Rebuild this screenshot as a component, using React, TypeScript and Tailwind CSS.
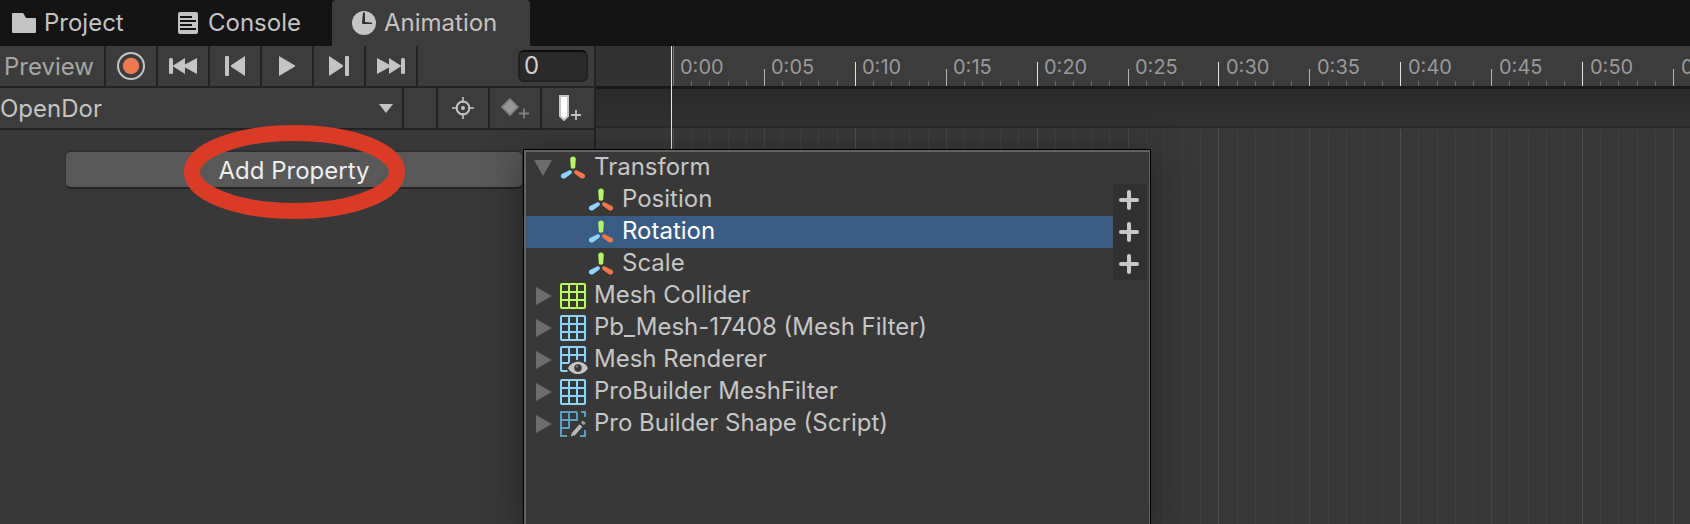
import React, { useState } from "react";

const FRAME_STEP = 1000 / 55;
const frames = Array.from({ length: 70 }, (_, i) => i);
const labels = Array.from({ length: 12 }, (_, i) => `0:${String(i * 5).padStart(2, "0")}`);

const frameX = (i: number) => Math.round(77 + i * FRAME_STEP);

function FolderIcon() {
  return (
    <svg width="24" height="20" viewBox="0 0 24 20" fill="#c4c4c4" aria-hidden="true">
      <path d="M0 1a1 1 0 0 1 1-1h9.5a1 1 0 0 1 1 .6L14 5h9a1 1 0 0 1 1 1v13a1 1 0 0 1-1 1H1a1 1 0 0 1-1-1z" />
    </svg>
  );
}

function ConsoleIcon() {
  return (
    <svg width="20" height="22" viewBox="0 0 20 22" aria-hidden="true">
      <rect width="20" height="22" rx="2" fill="#c4c4c4" />
      <path d="M2 5h12M2 9h16M2 13h12M2 17h16" stroke="#141414" strokeWidth="2" />
    </svg>
  );
}

function ClockIcon() {
  return (
    <svg width="24" height="24" viewBox="0 0 24 24" aria-hidden="true">
      <circle cx="12" cy="12" r="12" fill="#c4c4c4" />
      <path d="M11 1.5h2V11l7 .7v1.3h-9.2l-.8-.9z" fill="#2f2f2f" />
    </svg>
  );
}

function RecordIcon() {
  return (
    <svg width="28" height="28" viewBox="0 0 28 28" aria-hidden="true">
      <circle cx="14" cy="14" r="13" fill="none" stroke="#c4c4c4" strokeWidth="2" />
      <circle cx="14" cy="14" r="8.2" fill="#ee7950" />
    </svg>
  );
}

function FirstIcon() {
  return (
    <svg width="28" height="20" viewBox="0 0 28 20" fill="#c4c4c4" aria-hidden="true">
      <rect x="0" y="2" width="4" height="16" rx="1.5" />
      <path d="M16 2v6.5L28 2v16l-12-6.5V18L3.5 10z" />
    </svg>
  );
}

function PrevIcon() {
  return (
    <svg width="20" height="20" viewBox="0 0 20 20" fill="#c4c4c4" aria-hidden="true">
      <rect x="0" y="0" width="4" height="20" rx="1" />
      <path d="M20 0v20L6 10.8V9.2z" />
    </svg>
  );
}

function PlayIcon() {
  return (
    <svg width="16" height="20" viewBox="0 0 16 20" fill="#c4c4c4" aria-hidden="true">
      <path d="M0 0l16 9.5v1L0 20z" />
    </svg>
  );
}

function Flip({ children }: { children: React.ReactNode }) {
  return <span className="flex -scale-x-100">{children}</span>;
}

function TargetIcon() {
  return (
    <svg width="22" height="22" viewBox="0 0 22 22" fill="none" stroke="#c4c4c4" strokeWidth="2" aria-hidden="true">
      <circle cx="11" cy="11" r="6.4" />
      <path d="M11 0v6M11 16v6M0 11h6M16 11h6" strokeWidth="1.6" />
      <circle cx="11" cy="11" r="2" fill="#c4c4c4" stroke="none" />
    </svg>
  );
}

function KeyframeIcon() {
  return (
    <svg width="28" height="24" viewBox="0 0 28 24" aria-hidden="true">
      <path d="M9 3l8 8-8 8-8-8z" fill="#979797" stroke="#7d7d7d" strokeWidth="1.6" />
      <path d="M18 17.500h10M23 12.500v10" stroke="#808080" strokeWidth="1.8" />
    </svg>
  );
}

function EventIcon() {
  return (
    <svg width="22" height="26" viewBox="0 0 22 26" aria-hidden="true">
      <path d="M1 1h8v20l-4 4-4-4z" fill="#fff" stroke="#c4c4c4" strokeWidth="2" />
      <path d="M12 20h10M17 15v10" stroke="#c4c4c4" strokeWidth="1.8" />
    </svg>
  );
}

function TransformIcon() {
  return (
    <svg width="26" height="26" viewBox="0 0 26 26" strokeLinecap="round" aria-hidden="true">
      <path d="M10.200 4c0-3.400 5.600-3.400 5.600 0l-.6 8.500c-.3 1.600-4.100 1.600-4.400 0z" fill="#b4f266" />
      <path d="M5.500 17.300l4-2c2.200-.9 3.300 2.200 1.600 3.400l-5.600 4.300c-3.400 2.200-6.300-2.100-3.600-4z" fill="#8fd3fa" />
      <path d="M20.500 17.300l-4-2c-2.200-.9-3.300 2.200-1.600 3.400l5.600 4.300c3.400 2.200 6.300-2.100 3.600-4z" fill="#f3764b" />
    </svg>
  );
}

function GridIcon({ color }: { color: string }) {
  return (
    <svg width="26" height="26" viewBox="0 0 26 26" fill="none" stroke={color} strokeWidth="2" aria-hidden="true">
      <rect x="1" y="1" width="24" height="24" rx="1" />
      <path d="M9 1v24M17 1v24M1 9h24M1 17h24" />
    </svg>
  );
}

function RendererIcon() {
  return (
    <svg width="28" height="28" viewBox="0 0 28 28" fill="none" aria-hidden="true">
      <path d="M25 16V2a1 1 0 0 0-1-1H2a1 1 0 0 0-1 1v22a1 1 0 0 0 1 1h5.5M9 1v16M17 1v13M1 9h24M1 17h8" stroke="#8fd3fa" strokeWidth="2" />
      <path d="M8 22c4-8.500 16-8.500 20 0-4 8-16 8-20 0z" fill="#c4c4c4" />
      <circle cx="18" cy="22" r="3.700" fill="#383838" />
      <circle cx="17" cy="20.500" r="1" fill="#8c8c8c" />
    </svg>
  );
}

function ShapeIcon() {
  return (
    <svg width="28" height="26" viewBox="0 0 28 26" fill="none" aria-hidden="true">
      <path d="M25 6V1h-4M17 1H1v24h6M9 1v16M17 1v9M1 9h16M1 17h9M25 19v6h-5" stroke="#5f9cbf" strokeWidth="2" />
      <path d="M13 23.500l8-9" stroke="#b9b9b9" strokeWidth="4" />
      <path d="M22.300 13l2-2.300" stroke="#9a9a9a" strokeWidth="4" />
      <path d="M11 25.500l.8-3 2 1.800z" fill="#d0d0d0" />
    </svg>
  );
}

function Arrow({ open }: { open?: boolean }) {
  return (
    <svg width="18" height="18" viewBox="0 0 18 18" fill="#6c6c6c" aria-hidden="true">
      {open ? <path d="M0 1h18L9 17z" /> : <path d="M2 0l16 9-16 9z" />}
    </svg>
  );
}

function PlusIcon() {
  return (
    <svg width="20" height="20" viewBox="0 0 20 20" aria-hidden="true">
      <path d="M10 2v16M2 10h16" stroke="#c8c8c8" strokeWidth="4" strokeLinecap="round" />
    </svg>
  );
}

function Tool({ label, children }: { label: string; children: React.ReactNode }) {
  return (
    <button type="button" aria-label={label} className="flex w-[52px] items-center justify-center border-r-2 border-[#232323]">
      {children}
    </button>
  );
}

const components = [
  { name: "Mesh Collider", icon: <GridIcon color="#b9f95f" /> },
  { name: "Pb_Mesh-17408 (Mesh Filter)", icon: <GridIcon color="#8fd3fa" /> },
  { name: "Mesh Renderer", icon: <RendererIcon /> },
  { name: "ProBuilder MeshFilter", icon: <GridIcon color="#8fd3fa" /> },
  { name: "Pro Builder Shape (Script)", icon: <ShapeIcon /> },
];

function PropertyMenu() {
  const [selected, setSelected] = useState("Rotation");
  return (
    <div className="absolute top-[149px] bottom-0 left-[523px] w-[628px] border-x border-t border-black bg-[#383838] shadow-[0_8px_36px_rgba(0,0,0,0.4)]">
      <ul className="h-full border-t-2 border-r border-l-2 border-[#636363] leading-[30px] text-[#c6c6c6]">
        <li>
          <button type="button" aria-expanded="true" className="flex h-8 w-full items-center pl-2">
            <span className="w-[26px]"><Arrow open /></span>
            <span className="w-[34px]"><TransformIcon /></span>
            <span className="pb-[2px]">Transform</span>
          </button>
          <ul>
            {["Position", "Rotation", "Scale"].map((name) => (
              <li key={name} className="flex h-8 pr-[2px]">
                <button
                  type="button"
                  onClick={() => setSelected(name)}
                  className={`flex flex-1 items-center pl-[62px] ${selected === name ? "bg-[#3a5c84] text-white" : ""}`}
                >
                  <span className="w-[34px]"><TransformIcon /></span>
                  <span className="pb-[2px]">{name}</span>
                </button>
                <button type="button" aria-label={`Add ${name}`} className="flex w-[34px] items-center justify-center bg-[#313131] pr-[2px]">
                  <PlusIcon />
                </button>
              </li>
            ))}
          </ul>
        </li>
        {components.map((c) => (
          <li key={c.name}>
            <button type="button" aria-expanded="false" className="flex h-8 w-full items-center pl-2">
              <span className="w-[26px]"><Arrow /></span>
              <span className="w-[34px]">{c.icon}</span>
              <span className="pb-[2px]">{c.name}</span>
            </button>
          </li>
        ))}
      </ul>
    </div>
  );
}

function Timeline() {
  return (
    <section className="relative flex min-w-0 flex-1 flex-col overflow-hidden">
      <div className="relative h-10 bg-[#3c3c3c]">
        <svg className="absolute inset-0 h-full w-full" shapeRendering="crispEdges" aria-hidden="true">
          <rect width="77" height="40" fill="#323232" />
          <rect x="77" width="1" height="40" fill="#777" />
          {frames.slice(1).map((i) => {
            const h = i % 10 === 0 ? 24 : i % 5 === 0 ? 17 : 5;
            const fill = i % 10 === 0 ? "#e4e4e4" : i % 5 === 0 ? "#b4b4b4" : "#6c6c6c";
            return <rect key={i} x={frameX(i)} y={40 - h} width="1" height={h} fill={fill} />;
          })}
        </svg>
        <div className="relative flex h-full items-center pt-[2px] pl-[84px] text-[20px] text-[#999]">
          {labels.map((t) => (
            <span key={t} className="w-[91px] shrink-0">{t}</span>
          ))}
        </div>
      </div>
      <div className="h-[42px] border-t-3 border-b-2 border-t-[#191919] border-b-[#292929] bg-linear-to-b from-[#292929] to-[#313131]" />
      <div className="flex-1 bg-[#383838]">
        <svg className="h-full w-full" shapeRendering="crispEdges" aria-hidden="true">
          {frames.map((i) => (
            <rect key={i} x={frameX(i)} y="1" width="1" height="100%" fill={i % 10 === 0 ? "#505050" : i % 5 === 0 ? "#484848" : "#3f3f3f"} />
          ))}
        </svg>
      </div>
      <div className="absolute inset-y-0 left-[75px] w-px bg-[#e6e6e6]" />
    </section>
  );
}

export default function App() {
  return (
    <div className="relative flex h-screen flex-col overflow-hidden bg-[#383838] font-['Inter',sans-serif] text-[24px] leading-8 text-[#c4c4c4]">
      <nav className="flex h-[46px] shrink-0 bg-[#141414]">
        <button type="button" className="flex w-[166px] items-center gap-2 pl-3">
          <FolderIcon />
          Project
        </button>
        <button type="button" className="flex w-[166px] items-center gap-[10px] pl-3">
          <ConsoleIcon />
          Console
        </button>
        <button type="button" className="flex w-[198px] items-center gap-2 rounded-t-[4px] bg-[#3c3c3c] pl-5">
          <ClockIcon />
          Animation
        </button>
      </nav>
      <main className="flex min-h-0 flex-1">
        <section className="flex w-[596px] shrink-0 flex-col border-r-2 border-[#232323]">
          <div className="flex h-[42px] border-b-2 border-[#232323] bg-[#3c3c3c]">
            <button type="button" className="w-[106px] border-r-2 border-[#232323] pt-[2px] pl-1 text-left text-[#a6a6a6]">
              Preview
            </button>
            <Tool label="Record"><RecordIcon /></Tool>
            <Tool label="First frame"><FirstIcon /></Tool>
            <Tool label="Previous key"><PrevIcon /></Tool>
            <Tool label="Play"><PlayIcon /></Tool>
            <Tool label="Next key"><Flip><PrevIcon /></Flip></Tool>
            <Tool label="Last frame"><Flip><FirstIcon /></Flip></Tool>
            <input
              aria-label="Frame"
              defaultValue="0"
              className="mt-1 mr-[6px] ml-auto h-8 w-[70px] rounded-[6px] border-2 border-[#212121] border-t-[#0e0e0e] bg-[#2a2a2a] px-1 text-[#d0d0d0] outline-none"
            />
          </div>
          <div className="flex h-[42px] border-b-2 border-[#232323] bg-[#3c3c3c]">
            <div className="relative flex-1 border-r-2 border-[#232323]">
              <select aria-label="Clip" className="h-full w-full appearance-none bg-transparent pt-[2px] outline-none">
                <option>OpenDor</option>
              </select>
              <svg className="pointer-events-none absolute top-4 right-[9px]" width="14" height="9" viewBox="0 0 14 9" aria-hidden="true">
                <path d="M0 0h14L7 9z" fill="#c4c4c4" />
              </svg>
            </div>
            <div className="w-[34px] border-r-2 border-[#232323]" />
            <Tool label="Filter by selection"><TargetIcon /></Tool>
            <Tool label="Add keyframe"><KeyframeIcon /></Tool>
            <button type="button" aria-label="Add event" className="flex w-[52px] items-center justify-center pl-1">
              <EventIcon />
            </button>
          </div>
          <div className="relative pt-5 pr-[71px] pl-[65px]">
            <button type="button" className="flex h-[39px] w-full items-center justify-center rounded-[6px] border border-t-2 border-b-2 border-[#303030] border-b-[#232323] bg-[#585858] pt-[2px] text-[#eee]">
              Add Property
            </button>
            <svg className="pointer-events-none absolute -top-[5px] left-[184px]" width="221" height="94" viewBox="0 0 221 94" aria-hidden="true">
              <ellipse cx="110.5" cy="47" rx="102.500" ry="39" fill="none" stroke="#da3b26" strokeWidth="16" />
            </svg>
          </div>
        </section>
        <Timeline />
      </main>
      <PropertyMenu />
    </div>
  );
}
